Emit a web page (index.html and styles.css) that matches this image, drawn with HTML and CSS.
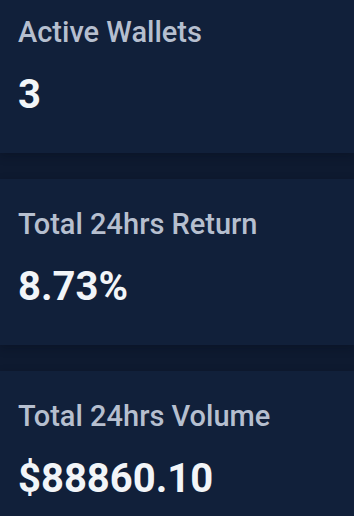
FILE: index.html
```html
<!DOCTYPE html>
<html lang="en">
<head>
<meta charset="utf-8">
<title>Stats</title>
<link rel="stylesheet" href="styles.css">
</head>
<body>
<main class="stats">
  <section class="card">
    <div class="label">Active Wallets</div>
    <div class="value">3</div>
  </section>
  <section class="card">
    <div class="label">Total 24hrs Return</div>
    <div class="value">8.73%</div>
  </section>
  <section class="card">
    <div class="label">Total 24hrs Volume</div>
    <div class="value">$88860.10</div>
  </section>
</main>
</body>
</html>
```
FILE: styles.css
```css
html, body {
  margin: 0;
  padding: 0;
  background: #0e1a30;
  height: 100%;
  overflow: hidden;
}
body {
  font-family: Roboto, "Liberation Sans", Arial, sans-serif;
}
.stats {
  display: flex;
  flex-direction: column;
  gap: 26px;
  margin-top: -13px;
}
.card {
  background: #11203a;
  height: 166px;
  box-sizing: border-box;
  padding: 29px 18px 0;
  display: flex;
  flex-direction: column;
  gap: 23px;
  box-shadow: 0 3px 8px rgba(6, 12, 26, 0.35);
}
.label {
  font-size: 29px;
  line-height: 32px;
  font-weight: 500;
  color: #b6bfcf;
}
.value {
  font-size: 40px;
  line-height: 48px;
  font-weight: 700;
  color: #f2f5f8;
}
```
